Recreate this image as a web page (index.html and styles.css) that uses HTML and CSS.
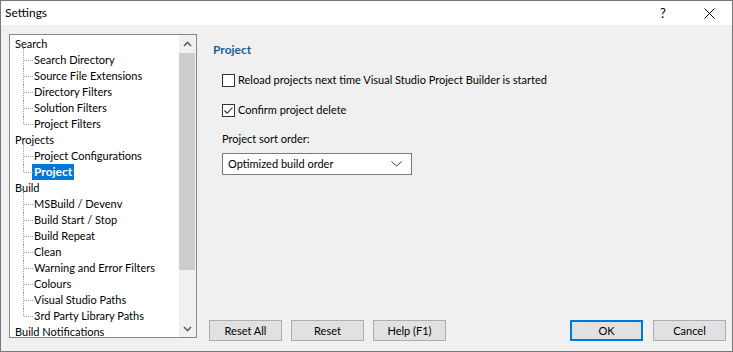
FILE: index.html
```
<!DOCTYPE html>
<html lang="en">
<head>
  <meta charset="UTF-8" />
  <title>Settings</title>
  <link rel="stylesheet" href="styles.css">
</head>
<body>
  <div class="window">

    <!-- barra de título -->
    <div class="titlebar">
      <span class="titlebar__text">Settings</span>
      <span class="titlebar__btn">?</span>
      <span class="titlebar__btn">
        <svg width="11" height="11" viewBox="0 0 11 11"><path d="M0.5 0.5 L10.5 10.5 M10.5 0.5 L0.5 10.5" stroke="#000" stroke-width="1" fill="none"/></svg>
      </span>
    </div>

    <div class="content">

      <!-- árvore de categorias -->
      <div class="tree">
        <ul class="tree__list">
          <li class="node">Search
            <ul class="children">
              <li>Search Directory</li>
              <li>Source File Extensions</li>
              <li>Directory Filters</li>
              <li>Solution Filters</li>
              <li>Project Filters</li>
            </ul>
          </li>
          <li class="node">Projects
            <ul class="children">
              <li>Project Configurations</li>
              <li><span class="selected">Project</span></li>
            </ul>
          </li>
          <li class="node">Build
            <ul class="children">
              <li>MSBuild / Devenv</li>
              <li>Build Start / Stop</li>
              <li>Build Repeat</li>
              <li>Clean</li>
              <li>Warning and Error Filters</li>
              <li>Colours</li>
              <li>Visual Studio Paths</li>
              <li>3rd Party Library Paths</li>
            </ul>
          </li>
          <li class="node">Build Notifications</li>
        </ul>

        <div class="scrollbar">
          <span class="scrollbar__arrow">
            <svg width="9" height="6" viewBox="0 0 9 6"><path d="M1 5 L4.5 1.5 L8 5" stroke="#606060" stroke-width="1.6" fill="none"/></svg>
          </span>
          <div class="scrollbar__track"><div class="scrollbar__thumb"></div></div>
          <span class="scrollbar__arrow">
            <svg width="9" height="6" viewBox="0 0 9 6"><path d="M1 1 L4.5 4.5 L8 1" stroke="#606060" stroke-width="1.6" fill="none"/></svg>
          </span>
        </div>
      </div>

      <!-- painel da página -->
      <div class="panel">
        <h2 class="panel__title">Project</h2>

        <label class="check">
          <span class="check__box"></span>
          Reload projects next time Visual Studio Project Builder is started
        </label>
        <label class="check check--second">
          <span class="check__box">
            <svg width="11" height="11" viewBox="0 0 11 11"><path d="M1.5 5.5 L4.2 8.3 L9.5 2.5" stroke="#222" stroke-width="1.1" fill="none"/></svg>
          </span>
          Confirm project delete
        </label>

        <div class="field-label">Project sort order:</div>
        <div class="select">
          <span>Optimized build order</span>
          <svg width="11" height="6" viewBox="0 0 11 6"><path d="M0.5 0.5 L5.5 5 L10.5 0.5" stroke="#333" stroke-width="1" fill="none"/></svg>
        </div>

        <div class="buttons">
          <button class="btn">Reset All</button>
          <button class="btn">Reset</button>
          <button class="btn">Help (F1)</button>
          <button class="btn btn--default btn--push">OK</button>
          <button class="btn btn--cancel">Cancel</button>
        </div>
      </div>

    </div>
  </div>
</body>
</html>
```

FILE: styles.css
```
/* BASE ----------------------------------------------------------------*/
*,::before,::after{box-sizing:border-box;margin:0;padding:0}
body{
  font-family:Lato,"Noto Sans",sans-serif;
  font-size:11px;
  line-height:16px;
  color:#000;
  background:#fff;
}

/* JANELA --------------------------------------------------------------*/
.window{
  width:733px;height:352px;
  border:1px solid #777;
  background:#f0f0f0;
  display:flex;flex-direction:column;
}
.titlebar{
  height:24px;
  background:#fff;
  display:flex;align-items:center;
  padding-left:4px;
  font-size:12px;
}
.titlebar__text{flex:1}
.titlebar__btn{
  width:46px;height:24px;
  display:flex;justify-content:center;align-items:center;
  font-size:13px;
}

.content{
  display:flex;
  align-items:flex-start;
  gap:12px;
  padding:9px 6px 0 8px;
}

/* ÁRVORE --------------------------------------------------------------*/
.tree{
  width:188px;height:304px;
  border:1px solid #828790;
  background:#fff;
  display:flex;
  overflow:hidden;
}
.tree__list{
  flex:1;
  list-style:none;
  padding-top:1px;
  overflow:hidden;
}
.node{padding-left:5px;white-space:nowrap}
.children{list-style:none;margin-left:8px}
.children li{
  position:relative;
  padding-left:11px;
}
.children li::before{               /* traço vertical pontilhado */
  content:"";
  position:absolute;
  left:0;top:0;bottom:0;
  border-left:1px dotted #a0a0a0;
}
.children li:first-child::before{top:-4px}
.children li:last-child::before{bottom:8px}
.children li::after{                /* traço horizontal */
  content:"";
  position:absolute;
  left:1px;top:8px;width:9px;
  border-top:1px dotted #a0a0a0;
}
.selected{
  background:#0078d7;
  color:#fff;
  font-weight:700;
  font-size:12px;
  padding:0 2px;
  margin-left:-2px;
  display:inline-block;
}

.scrollbar{
  width:17px;
  background:#f0f0f0;
  display:flex;flex-direction:column;
}
.scrollbar__arrow{
  height:17px;
  display:flex;justify-content:center;align-items:center;
}
.scrollbar__track{flex:1;padding-top:1px}
.scrollbar__thumb{height:217px;background:#cdcdcd;margin-right:1px}

/* PAINEL --------------------------------------------------------------*/
.panel{
  flex:1;
  height:307px;
  display:flex;flex-direction:column;
}
.panel__title{
  font-size:12px;
  font-weight:700;
  color:#1b5e98;
  margin:8px 0 0 4px;
}
.check{
  display:flex;align-items:flex-start;
  gap:3px;
  margin:14px 0 0 13px;
}
.check__box{
  width:13px;height:13px;
  margin-top:2px;
  border:1px solid #333;
  background:#fff;
  display:flex;justify-content:center;align-items:center;
}
.field-label{margin:13px 0 0 13px}
.select{
  width:190px;height:22px;
  margin:6px 0 0 13px;
  padding:0 9px 0 5px;
  border:1px solid #7a7a7a;
  background:#fff;
  display:flex;justify-content:space-between;align-items:center;
}

/* BOTÕES --------------------------------------------------------------*/
.buttons{margin-top:auto;display:flex;gap:9px}
.btn{
  width:73px;height:21px;
  font:inherit;
  background:#e1e1e1;
  border:1px solid #adadad;
  color:#000;
}
.btn--default{border:2px solid #0078d7}
.btn--push{margin-left:auto}
.btn--cancel{margin-left:1px}
```
